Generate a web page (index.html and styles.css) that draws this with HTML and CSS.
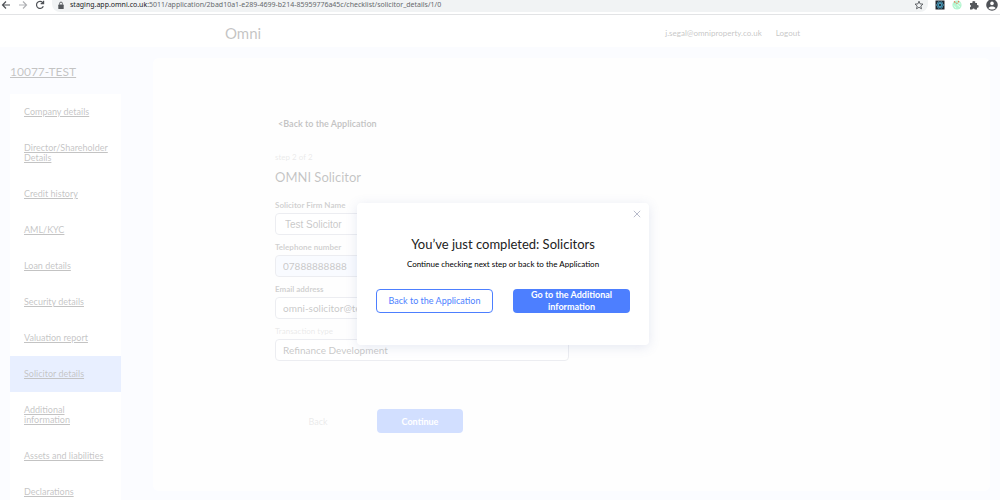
FILE: index.html
```html
<!DOCTYPE html>
<html lang="en">
<head>
<meta charset="utf-8">
<title>Omni – Solicitor details</title>
<link rel="stylesheet" href="styles.css">
</head>
<body>
<div class="browser">
  <button class="nav-btn" aria-label="Back"><svg viewBox="0 0 10 10"><path d="M9 5H1.500M5 1.500 1.500 5 5 8.500"/></svg></button>
  <button class="nav-btn nav-off" aria-label="Forward"><svg viewBox="0 0 10 10"><path d="M1 5h7.500M5 1.500 8.500 5 5 8.500"/></svg></button>
  <button class="nav-btn" aria-label="Reload"><svg viewBox="0 0 10 10"><path d="M8.300 6.200A3.500 3.500 0 1 1 7.600 2.500L8.500 3.500M8.600.8v2.900H5.700"/></svg></button>
  <div class="address">
    <svg class="lock" viewBox="0 0 8 10"><rect x="1" y="4" width="6" height="5" rx=".6" fill="#55585c"/><path d="M2.400 4V2.800a1.600 1.600 0 0 1 3.200 0V4" fill="none" stroke="#55585c"/></svg>
    <span class="url"><span class="host">staging.app.omni.co.uk</span>:5011/application/2bad10a1-e289-4699-b214-85959776a45c/checklist/solicitor_details/1/0</span>
    <svg class="star" viewBox="0 0 10 10"><path d="M5 1.200 6.100 3.900 9 4.100 6.800 6 7.500 8.800 5 7.300 2.500 8.800 3.200 6 1 4.100 3.900 3.900Z" fill="none" stroke="#55585c" stroke-width=".9"/></svg>
  </div>
  <div class="extensions">
    <svg viewBox="0 0 10 10"><path fill="#20262e" d="M.5.5h9v9h-9z"/><g fill="none" stroke="#4da3c4" stroke-width=".8"><ellipse cx="5" cy="5" rx="3.700" ry="1.500"/><ellipse cx="5" cy="5" rx="3.700" ry="1.500" transform="rotate(60 5 5)"/><ellipse cx="5" cy="5" rx="3.700" ry="1.500" transform="rotate(120 5 5)"/></g></svg>
    <svg viewBox="0 0 10 10"><circle cx="5" cy="5" r="4.600" fill="#b5f5d0"/><path d="M2 5.500 4 8M5 4.500 8 7M6 2.500 8.500 4" stroke="#e6fff0"/><path d="M2.200 1.300l1 1.400M6.800.8l-.4 1.500M4.500 3l.8.600" stroke="#ef6b4a" stroke-width="1.100"/></svg>
    <svg viewBox="0 0 10 10"><path fill="#55585c" d="M1 3h2.500a1.400 1.400 0 1 1 2.600 0H8v2.200a1.300 1.300 0 1 1 0 2.500V9.500H5.800a1.300 1.300 0 0 0-2.500 0H1V7.300a1.300 1.300 0 0 0 0-2.500Z"/></svg>
    <svg class="avatar" viewBox="0 0 12 12"><circle cx="6" cy="5" r="5.800" fill="#4f5257"/><circle cx="6" cy="3.400" r="1.800" fill="#fff"/><path fill="#fff" d="M2.400 8.200C3 6 9 6 9.600 8.200 8 10 4 10 2.400 8.200Z"/></svg>
  </div>
</div>
<div class="app">
  <header class="header">
    <span class="logo">Omni</span>
    <a class="account" href="#">j.segal@omniproperty.co.uk</a>
    <a class="account" href="#">Logout</a>
  </header>
  <div class="layout">
    <aside class="sidebar">
      <a class="case" href="#">10077-TEST</a>
      <nav class="menu">
        <a href="#">Company details</a>
        <a href="#">Director/Shareholder Details</a>
        <a href="#">Credit history</a>
        <a href="#">AML/KYC</a>
        <a href="#">Loan details</a>
        <a href="#">Security details</a>
        <a href="#">Valuation report</a>
        <a class="active" href="#">Solicitor details</a>
        <a href="#">Additional information</a>
        <a href="#">Assets and liabilities</a>
        <a href="#">Declarations</a>
      </nav>
    </aside>
    <main class="card">
      <form class="form">
        <a class="back-link" href="#">&lt;Back to the Application</a>
        <p class="step">step 2 of 2</p>
        <h1 class="title">OMNI Solicitor</h1>
        <div class="field"><label for="firm">Solicitor Firm Name</label><input class="plain" id="firm" value="Test Solicitor"></div>
        <div class="field"><label for="phone">Telephone number</label><input class="filled" id="phone" value="07888888888"></div>
        <div class="field"><label for="email">Email address</label><input id="email" value="omni-solicitor@test.com"></div>
        <div class="field muted"><label for="type">Transaction type</label><select id="type"><option>Refinance Development</option></select></div>
        <div class="actions">
          <button class="text-btn" type="button">Back</button>
          <button class="primary" type="button">Continue</button>
        </div>
      </form>
    </main>
  </div>
  <div class="overlay">
    <section class="modal" role="dialog" aria-labelledby="done">
      <button class="close" aria-label="Close"><svg viewBox="0 0 8 8"><path d="M.8.8l6.400 6.400M7.200.8.8 7.200"/></svg></button>
      <h2 id="done">You’ve just completed: Solicitors</h2>
      <p>Continue checking next step or back to the Application</p>
      <div class="choices">
        <button class="outline">Back to the Application</button>
        <button class="primary">Go to the Additional information</button>
      </div>
    </section>
  </div>
</div>
</body>
</html>
```
FILE: styles.css
```css
* { box-sizing: border-box; }
body {
  margin: 0;
  height: 100vh;
  overflow: hidden;
  display: flex;
  flex-direction: column;
  font-family: Lato, "Liberation Sans", sans-serif;
  font-size: 9px;
  color: #111;
  background: #fff;
}
button, input, select { font: inherit; color: inherit; margin: 0; }
button { padding: 0; border: 0; background: none; }
a { color: inherit; }
h1, h2, p { margin: 0; font-weight: 400; }
svg { display: block; flex: none; }

.browser {
  display: flex;
  flex: none;
  height: 15px;
  padding: 0 2px 2px 1px;
  border-bottom: 1px solid #e2e3e5;
}
.nav-btn { width: 10px; height: 10px; margin-right: 7px; }
.nav-btn svg { width: 10px; height: 10px; fill: none; stroke: #4f5257; stroke-width: 1.2; }
.nav-off svg { stroke: #b0b2b5; }
.address {
  flex: 1;
  display: flex;
  align-items: center;
  height: 12px;
  padding: 0 4px 2px 5px;
  border-radius: 0 0 8px 8px;
  background: #f1f3f4;
}
.lock { width: 8px; height: 9px; margin-right: 5px; }
.star { width: 10px; height: 10px; margin-left: auto; }
.url { font: 7px/10px "Noto Sans", sans-serif; color: #66696d; white-space: nowrap; }
.host { color: #202124; }
.extensions { display: flex; gap: 7px; padding-left: 7px; }
.extensions svg { width: 10px; height: 10px; }
.extensions .avatar { width: 12px; height: 12px; }

.app { position: relative; flex: 1; min-height: 0; display: flex; flex-direction: column; }
.header {
  display: flex;
  align-items: center;
  flex: none;
  height: 32px;
  gap: 14px;
  padding: 3px 200px 0 225px;
  background: #fff;
}
.logo { margin-right: auto; font-size: 15px; }
.account { font-size: 8px; text-decoration: none; }
.layout { flex: 1; min-height: 0; display: flex; background: #eff3ff; }
.sidebar { flex: none; width: 153px; padding: 17px 32px 0 10px; }
.case { display: block; font-size: 12px; line-height: 16px; }
.menu { margin-top: 14px; background: #fdfdff; }
.menu a { display: block; padding: 13px 12px 13px 14px; line-height: 10px; }
.menu .active { background: #a4bfff; }
.card { flex: 1; margin: 11px 10px 9px 0; padding: 60px 122px 0; border-radius: 6px; background: #fcfcfc; }
.form { max-width: 294px; }
.back-link { display: block; padding-left: 3px; line-height: 12px; font-weight: 700; text-decoration: none; }
.step { margin-top: 21px; font-size: 8px; line-height: 12px; color: #aaa; }
.title { margin: 5px 0 15px; font-size: 13px; line-height: 18px; }
.field { margin-bottom: 8px; }
.field label { display: block; height: 12px; font-size: 8px; line-height: 9px; font-weight: 700; color: #444; }
.field.muted label { color: #aaa; font-weight: 400; }
.field input, .field select {
  display: block;
  width: 100%;
  height: 22px;
  padding: 0 7px;
  border: 1px solid #b4b8c6;
  border-radius: 4px;
  background: #fff;
  font-size: 10px;
  appearance: none;
  color: #222;
}
.field .plain { padding: 0 9px; font-family: "Liberation Sans", sans-serif; }
.field .filled { background: #e8eeff; }
.actions { display: flex; gap: 16px; padding-top: 40px; }
.text-btn { width: 86px; color: #aaa; }
.primary { height: 24px; border-radius: 4px; background: #4d7fff; color: #fff; font-weight: 700; }
.actions .primary { width: 86px; }

.overlay {
  position: absolute;
  inset: 0;
  display: flex;
  align-items: center;
  justify-content: center;
  padding: 33px 0 0 6px;
  background: rgba(255, 255, 255, .75);
}
.modal {
  position: relative;
  width: 292px;
  padding: 32px 19px;
  border-radius: 4px;
  background: #fff;
  box-shadow: 0 2px 12px rgba(80, 100, 170, .15);
  text-align: center;
}
.close { position: absolute; top: 7px; right: 8px; }
.close svg { width: 8px; height: 8px; fill: none; stroke: #b9bccb; }
.modal h2 { font-size: 13px; line-height: 18px; color: #222; }
.modal p { margin-top: 5px; font-size: 8px; line-height: 12px; color: #000; }
.choices { display: grid; grid-template-columns: 1fr 1fr; gap: 20px; margin-top: 19px; }
.choices button { line-height: 12px; }
.choices .outline { border: 1px solid #4d7fff; border-radius: 4px; color: #4d7fff; }
```
